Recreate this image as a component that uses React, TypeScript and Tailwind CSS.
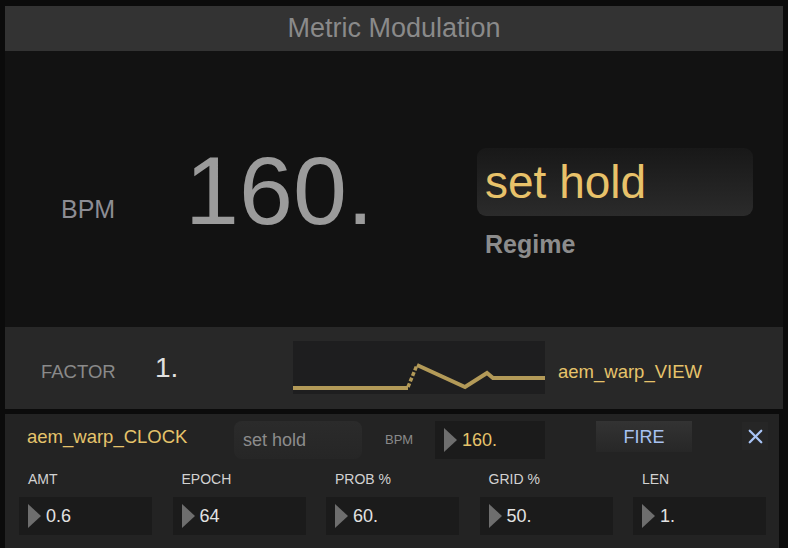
import { X } from "lucide-react";

const fields = [
  { label: "AMT", value: "0.6" },
  { label: "EPOCH", value: "64" },
  { label: "PROB %", value: "60." },
  { label: "GRID %", value: "50." },
  { label: "LEN", value: "1." },
];

function Arrow() {
  return (
    <svg width="13" height="24" viewBox="0 0 13 24" className="shrink-0" aria-hidden>
      <polygon points="0,0 13,12 0,24" fill="#6e6e6e" />
    </svg>
  );
}

function NumBox({ value, gold, width }: { value: string; gold?: boolean; width: string }) {
  return (
    <div className={"flex items-center h-[38px] bg-[#1b1b1b] pl-[9px] " + width}>
      <Arrow />
      <span
        className={
          "ml-[5px] text-[18px] leading-none " + (gold ? "text-[#e6c36b]" : "text-[#e2e2e2]")
        }
      >
        {value}
      </span>
    </div>
  );
}

function Wave() {
  return (
    <svg width="252" height="53" viewBox="0 0 252 53" aria-hidden>
      <polyline points="0,47 115,47" fill="none" stroke="#b39a58" strokeWidth="4" />
      <polyline
        points="115,46 124,24"
        fill="none"
        stroke="#b39a58"
        strokeWidth="3.5"
        strokeDasharray="4 2"
      />
      <polyline
        points="124,24 172,46 194,32 200,37 252,37"
        fill="none"
        stroke="#b39a58"
        strokeWidth="4"
        strokeLinejoin="miter"
      />
    </svg>
  );
}

export default function App() {
  return (
    <div className="w-[788px] h-[548px] overflow-hidden bg-[#0b0b0b] pt-[6px] pl-[5px] font-['Liberation_Sans',Arial,sans-serif]">
      <div className="w-[778px]">
        <div className="flex items-center justify-center h-[45px] bg-[#333333] text-[27px] leading-none text-[#8a8a8a]">
          Metric Modulation
        </div>

        <div className="flex items-start h-[276px] bg-[#121212]">
          <span className="ml-[56px] mt-[146px] w-[122px] text-[25px] leading-none text-[#8d8d94]">
            BPM
          </span>
          <span className="mt-[91px] w-[294px] pl-[2px] text-[97px] leading-none text-[#9b9b9b]">
            160.
          </span>
          <div className="mt-[97px] w-[276px] flex flex-col">
            <div className="flex items-center h-[68px] rounded-[9px] bg-linear-to-b from-[#181818] to-[#2b2b2b] pl-[8px] text-[46px] leading-none text-[#e8c26a]">
              set hold
            </div>
            <span className="mt-[16px] pl-[8px] text-[25px] font-bold leading-none text-[#8c8c8c]">
              Regime
            </span>
          </div>
        </div>

        <div className="flex items-start h-[82px] bg-[#282828]">
          <span className="ml-[36px] mt-[36px] w-[114px] text-[18.5px] leading-none text-[#8a8a8a]">
            FACTOR
          </span>
          <span className="mt-[27px] w-[138px] text-[28px] leading-none text-[#e0e0e0]">1.</span>
          <div className="mt-[14px] w-[252px] h-[53px] bg-[#1e1e1f]">
            <Wave />
          </div>
          <span className="ml-[13px] mt-[36px] text-[18.5px] leading-none text-[#e6c36b]">
            aem_warp_VIEW
          </span>
        </div>

        <div className="mt-[5px] w-[774px] h-[134px] bg-[#232323] pt-[7px] flex flex-col">
          <div className="flex items-start h-[38px]">
            <span className="ml-[22px] mt-[7px] w-[207px] text-[18.5px] leading-none text-[#e6c36b]">
              aem_warp_CLOCK
            </span>
            <div className="flex items-center w-[128px] h-[38px] rounded-[8px] bg-linear-to-b from-[#2b2b2b] to-[#262626] pl-[9px] text-[18px] leading-none text-[#8c8c8c]">
              set hold
            </div>
            <span className="ml-[23px] mt-[12px] w-[50px] text-[13px] leading-none text-[#8a8a8a]">
              BPM
            </span>
            <NumBox value="160." gold width="w-[110px]" />
            <button
              type="button"
              className="ml-[51px] flex items-center justify-center w-[96px] h-[31px] bg-linear-to-b from-[#333333] to-[#272727] text-[18px] leading-none text-[#a8c2f2]"
            >
              FIRE
            </button>
            <button
              type="button"
              aria-label="Close"
              className="ml-[50px] mt-[1px] flex items-center justify-center w-[26px] h-[28px] bg-[#262626]"
            >
              <X size={23} strokeWidth={2.4} className="text-[#a9c4f5]" aria-hidden />
            </button>
          </div>

          <div className="mt-[13px] pl-[14px] flex gap-[20.5px]">
            {fields.map((f) => (
              <div key={f.label} className="w-[133px] flex flex-col">
                <span className="pl-[9px] text-[14px] leading-none text-[#d2d2d2]">{f.label}</span>
                <div className="mt-[11px]">
                  <NumBox value={f.value} width="w-[133px]" />
                </div>
              </div>
            ))}
          </div>
        </div>
      </div>
    </div>
  );
}
